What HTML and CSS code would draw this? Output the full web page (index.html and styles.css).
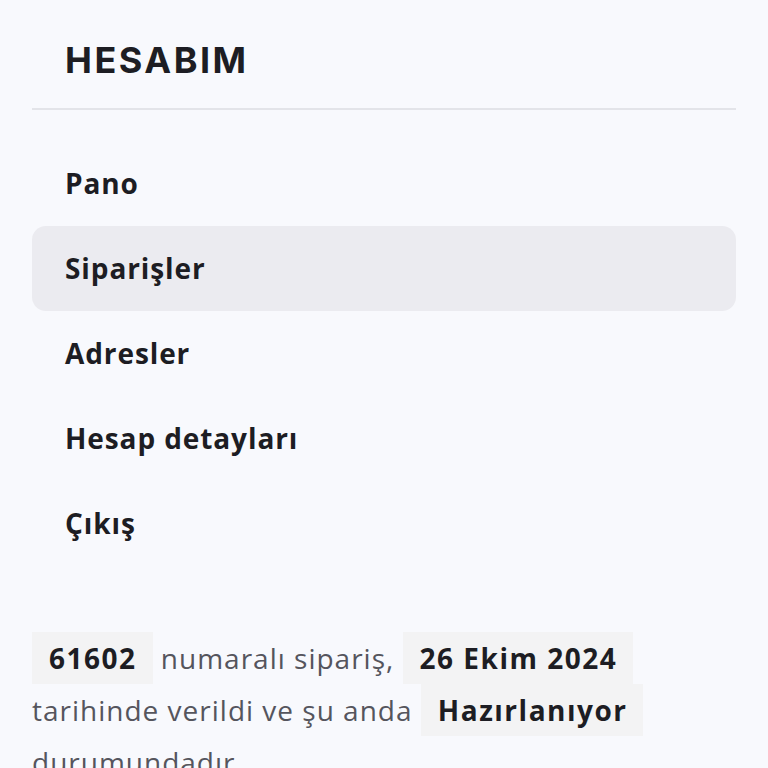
FILE: index.html
```
<!DOCTYPE html>
<html lang="tr">
<head>
<meta charset="UTF-8">
<title>Hesabım</title>
<link rel="stylesheet" href="styles.css">
</head>
<body>
<div class="account">
  <h2 class="title">HESABIM</h2>
  <ul class="nav">
    <li class="item">Pano</li>
    <li class="item active">Siparişler</li>
    <li class="item">Adresler</li>
    <li class="item">Hesap detayları</li>
    <li class="item">Çıkış</li>
  </ul>
  <p class="order-info">
    <mark class="tag">61602</mark> numaralı sipariş, <mark class="tag">26 Ekim 2024</mark>
    tarihinde verildi ve şu anda <mark class="tag">Hazırlanıyor</mark> durumundadır.
  </p>
</div>
</body>
</html>
```

FILE: styles.css
```
body{
margin:0;
background:#f8f9fd;
font-family:"Open Sans","Noto Sans",sans-serif;
color:#1d1d23;
}
.account{padding:0 32px;}
.title{
margin:0;
padding:38px 33px 26px;
font-family:"Inter",sans-serif;
font-size:36px;font-weight:700;
letter-spacing:2.5px;
border-bottom:2px solid #e3e4e9;
}
/* nav */
.nav{list-style:none;margin:0;padding:31px 0 0;}
.nav>.item{
height:85px;line-height:85px;
padding-left:33px;
font-size:28px;font-weight:700;
letter-spacing:0.9px;
border-radius:14px;
}
.nav>.active{background:#ebebf0;}
/* order */
.order-info{
margin:66px 0 0;
font-size:28px;line-height:52px;
letter-spacing:1px;
color:#55555d;
}
.order-info>.tag{
display:inline-block;
padding:0 16px 0 17px;
line-height:52px;
background:#f3f3f4;
color:#1d1d23;font-weight:700;
letter-spacing:1.5px;
}
```
